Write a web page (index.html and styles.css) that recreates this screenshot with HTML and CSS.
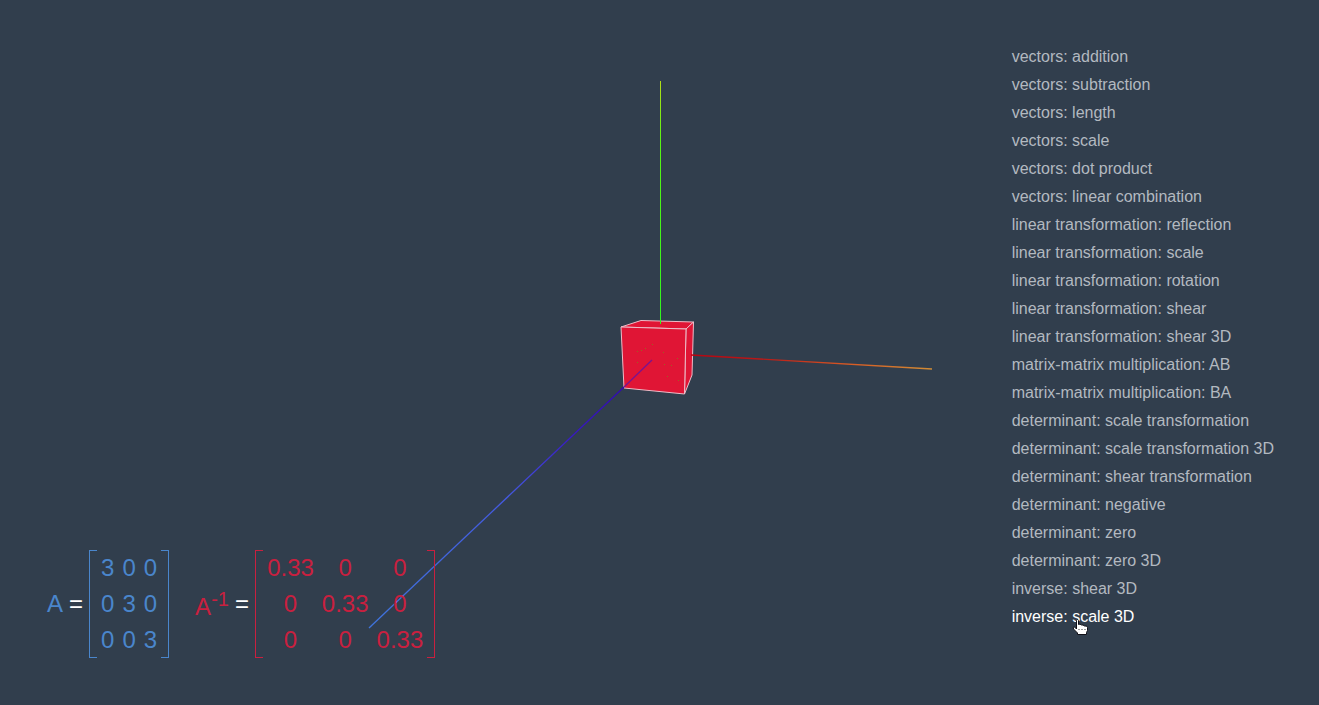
FILE: index.html
```html
<!DOCTYPE html>
<html lang="en">
<head>
<meta charset="utf-8">
<title>Linear algebra: inverse scale 3D</title>
<link rel="stylesheet" href="styles.css">
</head>
<body>
<svg class="scene" viewBox="0 0 1319 705" preserveAspectRatio="xMidYMid slice" role="img" aria-label="Cube with three axes">
  <defs>
    <linearGradient id="x-axis" gradientUnits="userSpaceOnUse" x1="692" y1="355" x2="932" y2="369">
      <stop offset="0" stop-color="#b80410"/><stop offset=".3" stop-color="#b81a18"/><stop offset=".65" stop-color="#d85a24"/><stop offset="1" stop-color="#d08c35"/>
    </linearGradient>
    <linearGradient id="y-axis" gradientUnits="userSpaceOnUse" x1="660" y1="81" x2="660" y2="324">
      <stop offset="0" stop-color="#b5dc18"/><stop offset=".25" stop-color="#58f414"/><stop offset="1" stop-color="#30f420"/>
    </linearGradient>
    <linearGradient id="z-axis" gradientUnits="userSpaceOnUse" x1="369" y1="628" x2="624" y2="387">
      <stop offset="0" stop-color="#3f74dc"/><stop offset=".55" stop-color="#4458e0"/><stop offset=".8" stop-color="#3818c4"/><stop offset="1" stop-color="#3008b4"/>
    </linearGradient>
  </defs>
  <g class="faces">
    <path d="M621 327L641 320.5L693.5 322L686 329Z"/>
    <path d="M686 329L693.5 322L692 375L684.5 394Z"/>
    <path d="M621 327L686 329L684.5 394L624 388Z"/>
  </g>
  <path class="speckles" d="M637 351.5h1M641 350.5h1M645 348.5h1M652 344.5h1M663 352.5h1M664 364.5h1M671 365.5h1M677 358.5h1M667 376.5h1M678 380.5h1M637 362.5h1"/>
  <path class="axis-x" d="M691 355L932 369"/>
  <path class="axis-y" d="M660 81h1v243h-1z"/>
  <path class="axis-z" d="M369 628L624 387"/>
  <path class="axis-z-near" d="M624 387L652 360"/>
</svg>

<main class="equations">
  <section class="equation equation-a" aria-label="Matrix A">
    <span class="name">A</span><span class="equals">=</span>
    <div class="matrix">
      <table>
        <tr><td>3</td><td>0</td><td>0</td></tr>
        <tr><td>0</td><td>3</td><td>0</td></tr>
        <tr><td>0</td><td>0</td><td>3</td></tr>
      </table>
    </div>
  </section>
  <section class="equation equation-inverse" aria-label="Inverse of A">
    <span class="name">A<sup>-1</sup></span><span class="equals">=</span>
    <div class="matrix">
      <table>
        <tr><td>0.33</td><td>0</td><td>0</td></tr>
        <tr><td>0</td><td>0.33</td><td>0</td></tr>
        <tr><td>0</td><td>0</td><td>0.33</td></tr>
      </table>
    </div>
  </section>
</main>

<nav class="menu" aria-label="Topics">
  <a href="#">vectors: addition</a>
  <a href="#">vectors: subtraction</a>
  <a href="#">vectors: length</a>
  <a href="#">vectors: scale</a>
  <a href="#">vectors: dot product</a>
  <a href="#">vectors: linear combination</a>
  <a href="#">linear transformation: reflection</a>
  <a href="#">linear transformation: scale</a>
  <a href="#">linear transformation: rotation</a>
  <a href="#">linear transformation: shear</a>
  <a href="#">linear transformation: shear 3D</a>
  <a href="#">matrix-matrix multiplication: AB</a>
  <a href="#">matrix-matrix multiplication: BA</a>
  <a href="#">determinant: scale transformation</a>
  <a href="#">determinant: scale transformation 3D</a>
  <a href="#">determinant: shear transformation</a>
  <a href="#">determinant: negative</a>
  <a href="#">determinant: zero</a>
  <a href="#">determinant: zero 3D</a>
  <a href="#">inverse: shear 3D</a>
  <a href="#" class="active">inverse: scale 3D
    <svg class="cursor" viewBox="0 0 17 18" aria-hidden="true">
      <path d="M4.500 2.500Q5.500 .5 6.500 2.500V6.500Q8 5.500 9.500 7Q11 6.500 12.500 8Q15.500 7.500 15.500 9.500V12.500L14.500 14.500V16.500H5.500V15L1.500 11Q.5 8.500 2.500 9L4.500 11Z"/>
      <path class="knuckles" d="M6 11.500h2M9 11.500h2M12 11.500h2"/>
    </svg>
  </a>
</nav>
</body>
</html>
```
FILE: styles.css
```css
*,
*::before,
*::after {
  box-sizing: border-box;
}

body {
  margin: 0;
  min-height: 100vh;
  display: flex;
  justify-content: space-between;
  background: #313e4d;
  font-family: "Liberation Sans", Arial, sans-serif;
}

.scene {
  position: absolute;
  inset: 0;
  width: 100%;
  height: 100%;
  fill: none;
}

.faces {
  fill: #e01535;
  stroke: #eebcc8;
  stroke-width: 1;
  stroke-linejoin: round;
}

.speckles {
  stroke: #9a6420;
}

.axis-x {
  stroke: url(#x-axis);
  stroke-width: 1.3;
}

.axis-y {
  fill: url(#y-axis);
}

.axis-z {
  stroke: url(#z-axis);
  stroke-width: 1.3;
}

.axis-z-near {
  stroke: #7a1490;
  stroke-width: 1.3;
}

.equations {
  position: relative;
  align-self: flex-end;
  display: flex;
  gap: 26px;
  padding: 0 0 47px 47px;
  font-size: 24px;
}

.equation {
  display: flex;
  align-items: center;
  gap: 6px;
}

.equation-a {
  color: #4a86cc;
}

.equation-inverse {
  color: #c9203f;
}

.name {
  flex: 0 0 16px;
}

.equation-inverse .name {
  flex-basis: 34px;
}

.equals {
  flex: 0 0 14px;
  color: #fff;
}

.name sup {
  font-size: 20px;
}

.matrix {
  position: relative;
  padding: 0 8px;
}

.matrix::before,
.matrix::after {
  content: "";
  position: absolute;
  top: 0;
  bottom: 0;
  width: 8px;
  border: 1px solid;
}

.matrix::before {
  left: 0;
  border-right: 0;
}

.matrix::after {
  right: 0;
  border-left: 0;
}

table {
  border-collapse: collapse;
}

td {
  height: 36px;
  padding: 0 4px;
  line-height: 28px;
  text-align: center;
}

.menu {
  position: relative;
  display: flex;
  flex-direction: column;
  align-items: flex-start;
  padding: 43px 45px 0 0;
}

.menu a {
  position: relative;
  color: #b3b9c0;
  font-size: 16px;
  line-height: 28px;
  text-decoration: none;
}

.menu .active {
  color: #fff;
}

.cursor {
  position: absolute;
  top: 15px;
  left: 60px;
  width: 17px;
  height: 18px;
  fill: #fff;
  stroke: #101018;
}

.knuckles {
  stroke: #999;
}
```
